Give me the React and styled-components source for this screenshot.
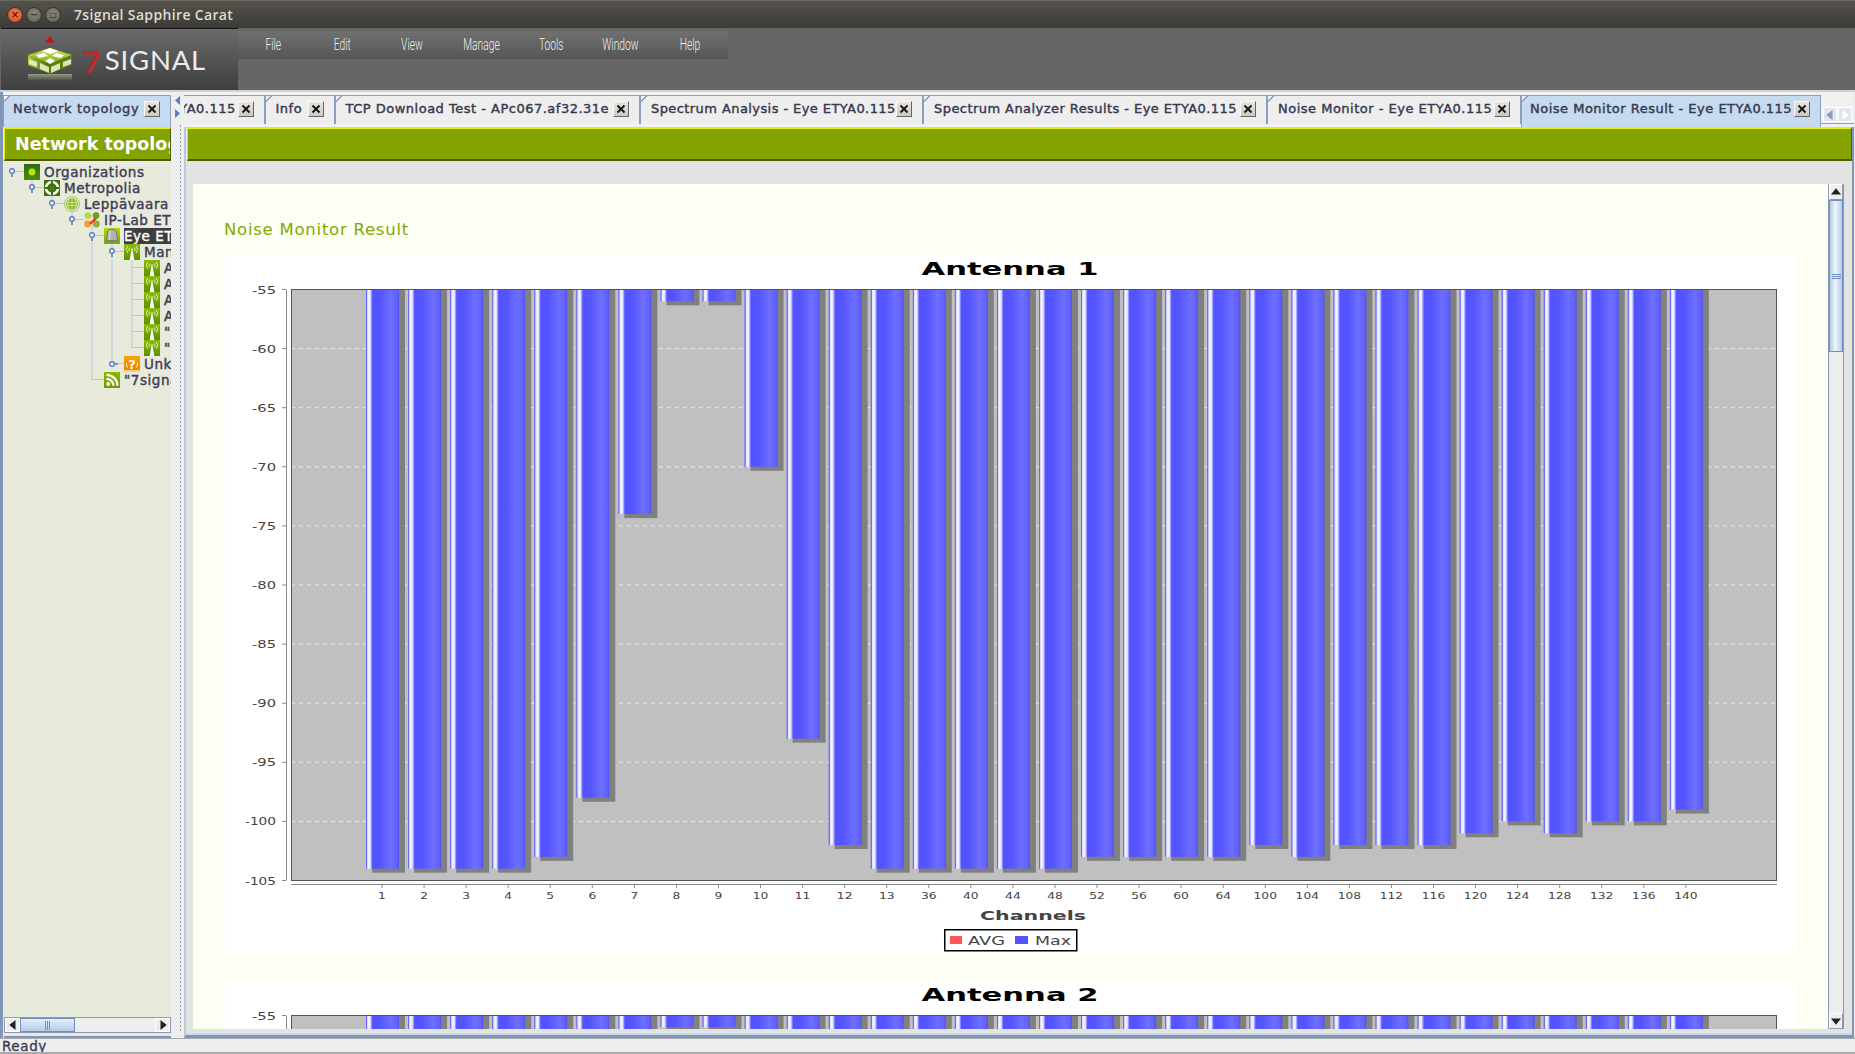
import React from "react";
import styled, { createGlobalStyle } from "styled-components";

const Global = createGlobalStyle`
  html, body { margin: 0; padding: 0; width: 1855px; height: 1054px; overflow: hidden; background: #eee; }
  * { box-sizing: border-box; }
`;
const UI = `"DejaVu Sans", "Liberation Sans", sans-serif`;

const Page = styled.div`
  width: 1855px; height: 1054px; display: flex; flex-direction: column; font-family: ${UI}; overflow: hidden;
`;
const TitleBar = styled.div`
  height: 28px; flex: none; display: flex; align-items: center; padding-left: 7px;
  background: linear-gradient(#55524c, #3c3b37); border-top: 1px solid #6a675f;
`;
const Light = styled.span`
  width: 16px; height: 16px; border-radius: 50%; margin-right: 3px; display: flex; align-items: center; justify-content: center;
  color: ${p => p.$close ? "#5a1a08" : "#3c3b37"}; font: bold 10px ${UI}; line-height: 1;
  background: ${p => p.$close ? "radial-gradient(circle at 50% 40%, #f08050, #d8481c)" : "radial-gradient(circle at 50% 40%, #8a877f, #5f5d56)"};
  border: 1px solid #36352f;
`;
const TitleText = styled.span`
  margin-left: 10px; color: #dfdbd2; font: 600 14px "Open Sans", sans-serif; letter-spacing: .35px;
`;
const Header = styled.div`
  height: 62px; flex: none; display: flex; background: #666;
`;
const LogoBox = styled.div`
  width: 237px; margin-left: 1px; height: 100%; flex: none; display: flex; align-items: center;
  border-top: 1px solid #111; background: linear-gradient(#6b6b6b, #3e3e3e);
  padding-left: 27px;
`;
const LogoSvg = styled.svg`
  flex: none; margin-top: -3px;
`;
const LogoWord = styled.span`
  font: 400 27.5px Lato, sans-serif; color: #ececec; letter-spacing: .8px; margin-left: 9px; margin-top: 4px; line-height: 1; display: flex;
  b { color: #c3262c; font-weight: 700; font-size: 31px; margin-right: 3px; font-family: Lato, sans-serif; }
`;
const Menu = styled.div`
  margin-top: 3px; width: 490px; height: 28px; display: flex; align-items: center;
  background: linear-gradient(#707070, #575757); border-bottom: 1px solid #4e4e4e;
`;
const MenuItem = styled.div`
  width: 69.6px; text-align: center; color: #f0f0f0; font: 300 16px Roboto, sans-serif;
  span { display: inline-block; transform: scaleX(.64); }
`;
const Workspace = styled.div`
  flex: 1; min-height: 0; display: flex; background: #e9e9e9; border-top: 2px solid #c9d2de;
`;
const LeftPane = styled.div`
  width: 171px; flex: none; display: flex; flex-direction: column; border-left: 3px solid #8096b8;
`;
const TabRow = styled.div`
  height: 35px; flex: none; position: relative; display: flex; align-items: flex-start; padding-top: 3px;
  overflow: hidden; background: #f1f1f1;
  &::after { content: ""; position: absolute; left: 0; right: 0; bottom: 3px; height: 1px; background: #8ba0bd; }
`;
const Tabs = styled.div`
  flex: 1; min-width: 0; display: flex; justify-content: ${p => p.$start ? "flex-start" : "flex-end"}; overflow: hidden; height: 100%;
`;
const Tab = styled.div`
  width: ${p => p.$w}px; flex: none; height: ${p => p.$active ? 32 : 29}px; position: relative; z-index: 1;
  display: flex; align-items: center; padding-left: ${p => p.$pl || 10}px; padding-right: 10px; white-space: nowrap;
  background: ${p => p.$active ? "#c6daf0" : "#eeeeee"}; overflow: hidden;
  border-top: 1px solid #8ba0bd; border-right: 1px solid #8ba0bd; border-left: 1px solid #8ba0bd;
  padding-bottom: ${p => p.$active ? 6 : 3}px;
  &::before {
    content: ""; position: absolute; left: -1px; top: -1px; width: 7px; height: 7px;
    background: linear-gradient(135deg, #f1f1f1 48%, #8ba0bd 48%, #8ba0bd 58%, transparent 58%);
  }
`;
const TabLabel = styled.span`
  color: #38384e; font-size: 13px; letter-spacing: ${p => p.$ls ?? .5}px; -webkit-text-stroke: .4px #38384e;
`;
const Close = styled.span`
  width: 16px; height: 16px; flex: none; margin-left: auto; display: flex; align-items: center; justify-content: center;
  background: linear-gradient(#e8e4dc, #cfcac0); border: 1px solid; border-color: #f8f8f8 #666 #666 #f8f8f8;
`;
const CloseBtn = () => (
  <Close><svg width="10" height="10" viewBox="0 0 10 10"><path d="M1.5 1.5 8.5 8.5M8.5 1.5 1.5 8.5" stroke="#111" strokeWidth="1.8" /></svg></Close>
);
const TitlePanel = styled.div`
  height: 34px; flex: none; display: flex; align-items: center; overflow: hidden; white-space: nowrap;
  background: #85a300; border-top: 2px solid #e6f000; border-bottom: 2px solid #4c5e00; border-left: 1px solid #e6f000; border-right: 1px solid #4c5e00;
  color: #fff; font-weight: 700; font-size: 17.5px; padding-left: 10px;
`;
const LeftTitle = styled(TitlePanel)`
  margin-left: 1px; width: 167px;
`;
const TreeBox = styled.div`
  flex: 1; min-height: 0; position: relative; overflow: hidden; background: #e8eadb; margin: 3px 0 0 1px; width: 167px;
`;
const TreeLines = styled.svg`
  position: absolute; left: 0; top: 0; pointer-events: none;
`;
const TreeRow = styled.div`
  height: 16px; display: flex; align-items: center; padding-left: ${p => 20 + p.$level * 20}px; white-space: nowrap; position: relative;
`;
const TreeIcon = styled.span`
  width: 16px; height: 16px; flex: none; display: block; svg { display: block; }
`;
const TreeText = styled.span`
  margin-left: 4px; color: ${p => p.$sel ? "#fff" : "#3d3d55"}; background: ${p => p.$sel ? "#3e3e3e" : "transparent"};
  font-size: 13.5px; letter-spacing: .55px; -webkit-text-stroke: ${p => p.$strong ? ".6px" : ".4px"}; line-height: 16px;
`;
const HScroll = styled.div`
  height: 16px; flex: none; width: 167px; margin-left: 1px; display: flex; align-items: stretch; background: #eee; border: 1px solid #8a99ad;
`;
const ScrollBtn = styled.div`
  width: 15px; flex: none; display: flex; align-items: center; justify-content: center; background: #eeeeee;
  border: 1px solid #fff;
`;
const HThumb = styled.div`
  width: 55px; flex: none; display: flex; align-items: center; justify-content: center; gap: 1px;
  background: linear-gradient(#e6eefa, #b4cce8); border: 1px solid #6f8fc0;
  i { width: 1px; height: 9px; background: #6f8fc0; display: block; }
`;
const Track = styled.div` flex: 1; `;
const LeftFoot = styled.div` height: 5px; flex: none; margin-left: 1px; width: 167px; border-bottom: 2px solid #8096b8; `;
const Divider = styled.div`
  width: 13px; flex: none; position: relative; background: #eee;
  &::after {
    content: ""; position: absolute; left: 8px; top: 32px; bottom: 6px; width: 3px;
    background-image: radial-gradient(circle, #9a9a9a 0 1px, transparent 1px); background-size: 3px 4px;
  }
`;
const DividerArrows = styled.svg` position: absolute; left: 3px; top: 3px; `;
const MainPane = styled.div`
  flex: 1; min-width: 0; display: flex; flex-direction: column; margin-right: 1px;
`;
const Nav = styled.div`
  flex: none; display: flex; gap: 1px; padding: 12px 2px 0 2px; position: relative; z-index: 1;
`;
const NavBtn = styled.div`
  width: 14px; height: 15px; background: #dfe6f0; border: 1px solid #fff; display: flex; align-items: center; justify-content: center;
`;
const Body = styled.div`
  flex: 1; min-height: 0; display: flex; flex-direction: column; background: #e3e3e3;
  border-left: 2px solid #b8c8de; border-right: 2px solid #8096b8; border-bottom: 3px solid #8096b8;
  box-shadow: inset 0 -2px 0 #c6daf0; padding-bottom: 6px;
`;
const GreenBar = styled(TitlePanel)` margin-left: 1px; `;
const Content = styled.div`
  margin: 23px 8px 0 7px; flex: 1; min-height: 0; display: flex; background: #fbfff4;
`;
const Scroller = styled.div`
  flex: 1; min-width: 0; overflow: hidden; padding: 35px 0 0 33px;
`;
const Heading = styled.div`
  height: 22px; margin: 0 0 15px -2px; color: #84a800; font-size: 16.5px; line-height: 22px; letter-spacing: .75px;
`;
const Card = styled.div`
  width: 1569px; height: 696px; background: #fff; margin-bottom: 30px; svg { display: block; }
`;
const VScroll = styled.div`
  width: 16px; flex: none; display: flex; flex-direction: column; background: #eee; border-left: 1px solid #8a99ad; border-right: 1px solid #8a99ad;
`;
const VThumb = styled.div`
  height: 152px; flex: none; display: flex; flex-direction: column; align-items: center; justify-content: center; gap: 1px;
  background: linear-gradient(90deg, #b4cce8, #f0f5fc 45%, #b4cce8); border: 1px solid #6f8fc0;
  i { height: 1px; width: 9px; background: #6f8fc0; display: block; }
`;
const VBtn = styled.div`
  height: 16px; flex: none; background: #eee; border: 1px solid #fff; border-color: #fff #8a99ad #8a99ad #fff; display: flex; align-items: center; justify-content: center;
`;
const Status = styled.div`
  height: 16px; flex: none; background: #eee; border-top: 1px solid #aaa; border-bottom: 2px solid #aaa; padding-left: 2px;
  color: #38384e; font-size: 13.5px; line-height: 15px; letter-spacing: .6px; -webkit-text-stroke: .3px #38384e; overflow: hidden;
`;

/* ---------- chart ---------- */
const OX = 226, OY = 256;
const channels = [1,2,3,4,5,6,7,8,9,10,11,12,13,36,40,44,48,52,56,60,64,100,104,108,112,116,120,124,128,132,136,140];
const values = [-104,-104,-104,-104,-103,-98,-74,-56,-56,-70,-93,-102,-104,-104,-104,-104,-104,-103,-103,-103,-103,-102,-103,-102,-102,-102,-101,-100,-101,-100,-100,-99];
const yOf = v => 289.5 + (-55 - v) * 11.82 - OY;
const xOf = i => 366 + 42.06 * i - OX;
const PX = 291 - OX, PR = 1777 - OX, PT = 289.5 - OY, PB = 880.5 - OY;

const Stretch = ({ x, y, w, anchor = "middle", fill = "#444", size = 9, weight = 400, children }) => (
  <text x={x} y={y} textLength={w} lengthAdjust="spacingAndGlyphs" textAnchor={anchor} fill={fill} fontSize={size} fontWeight={weight} fontFamily={UI}>{children}</text>
);

const Chart = ({ title, id }) => (
  <Card>
    <svg width="1569" height="696" viewBox="0 0 1569 696">
      <defs>
        <linearGradient id={`bar${id}`} x1="0" x2="1" y1="0" y2="0">
          <stop offset="0" stopColor="#5a5aff" />
          <stop offset=".025" stopColor="#7070ff" />
          <stop offset=".045" stopColor="#d8d8ff" />
          <stop offset=".08" stopColor="#f8f8ff" />
          <stop offset=".13" stopColor="#e4e4ff" />
          <stop offset=".17" stopColor="#8c8cff" />
          <stop offset=".2" stopColor="#5252ff" />
          <stop offset=".45" stopColor="#5656ff" />
          <stop offset=".75" stopColor="#6e6eff" />
          <stop offset=".93" stopColor="#6262ff" />
          <stop offset="1" stopColor="#5252ea" />
        </linearGradient>
      </defs>
      <Stretch x={784} y={19} w={177} size={17} weight={700} fill="#000">{title}</Stretch>
      <rect x={PX} y={PT} width={PR - PX} height={PB - PT} fill="#c0c0c0" />
      {Array.from({ length: 9 }, (_, k) => {
        const y = yOf(-60 - k * 5);
        return <line key={k} x1={PX} x2={PR} y1={y} y2={y} stroke="#e8e8e8" strokeDasharray="4 4" />;
      })}
      {values.map((v, i) => (
        <rect key={`s${i}`} x={xOf(i) + 6} y={PT} width={33} height={yOf(v) - PT + 4} fill="#808080" />
      ))}
      {values.map((v, i) => (
        <rect key={`b${i}`} x={xOf(i)} y={PT} width={33} height={yOf(v) - PT} fill={`url(#bar${id})`} />
      ))}
      <rect x={PX + .5} y={PT} width={PR - PX - 1} height={PB - PT} fill="none" stroke="#555" />
      <line x1={60.5} x2={60.5} y1={PT} y2={PB} stroke="#888" />
      {Array.from({ length: 11 }, (_, k) => {
        const v = -55 - k * 5, y = yOf(v);
        return (
          <g key={v}>
            <line x1={56} x2={60} y1={y} y2={y} stroke="#888" />
            <Stretch x={50} y={y + 4} anchor="end" w={v <= -100 ? 31 : 24} size={10}>{v}</Stretch>
          </g>
        );
      })}
      <line x1={PX} x2={PR} y1={628.5} y2={628.5} stroke="#888" />
      {channels.map((c, i) => {
        const x = xOf(i) + 16;
        const s = String(c);
        return (
          <g key={c}>
            <line x1={x} x2={x} y1={628} y2={632} stroke="#888" />
            <Stretch x={x} y={643} w={s.length * 7.8} size={9}>{s}</Stretch>
          </g>
        );
      })}
      <Stretch x={807} y={664} w={106} size={13} weight={700}>Channels</Stretch>
      <rect x={718.75} y={673.75} width={132} height={21} fill="#fff" stroke="#000" strokeWidth="1.5" />
      <rect x={724} y={680} width={12} height={8} fill="#ff5555" />
      <Stretch x={742} y={689} w={37} anchor="start" size={12}>AVG</Stretch>
      <rect x={789} y={680} width={13} height={8} fill="#5555ff" />
      <Stretch x={809} y={689} w={36} anchor="start" size={12}>Max</Stretch>
    </svg>
  </Card>
);

/* ---------- icons ---------- */
const Tile = ({ from = "#9ac400", to = "#4f7d00", id, children }) => (
  <svg width="16" height="16" viewBox="0 0 16 16">
    <defs><linearGradient id={id} x1="0" x2="0" y1="0" y2="1"><stop offset="0" stopColor={from} /><stop offset="1" stopColor={to} /></linearGradient></defs>
    <rect width="16" height="16" fill={`url(#${id})`} />
    {children}
  </svg>
);
const IconOrg = () => <Tile id="t1" from="#2f6a10" to="#4d8a12"><circle cx="8" cy="8" r="3.4" fill="#b8e800" /></Tile>;
const IconCity = () => (
  <svg width="16" height="16" viewBox="0 0 16 16">
    <rect width="16" height="16" fill="#3e6e10" />
    <circle cx="8" cy="8" r="6" fill="none" stroke="#f4f8ee" strokeWidth="2.6" />
    <path d="M8 4V1M8 12v3M4 8H1M12 8h3" stroke="#3e6e10" strokeWidth="2" />
    <circle cx="8" cy="8" r="2.6" fill="#4f7d10" />
  </svg>
);
const IconGlobe = () => (
  <svg width="16" height="16" viewBox="0 0 16 16">
    <circle cx="8" cy="8" r="7.4" fill="#f2f6e4" stroke="#9cc34a" />
    <circle cx="8" cy="8" r="6" fill="#8cba30" />
    <path d="M2.5 6.5h11M2.5 9.5h11M8 2.2v11.6M5 3c-1.5 3-1.5 7 0 10M11 3c1.5 3 1.5 7 0 10" stroke="#dbecb0" strokeWidth=".7" fill="none" />
  </svg>
);
const IconHex = () => (
  <svg width="16" height="16" viewBox="0 0 16 16">
    <circle cx="4" cy="3.6" r="3.4" fill="#b4d840" />
    <circle cx="12" cy="3.6" r="3.4" fill="#6aa018" />
    <circle cx="3.6" cy="12" r="3.4" fill="#f5a020" />
    <circle cx="12.4" cy="12" r="3.4" fill="#90b040" />
    <path d="M5 11.5 11 5.5 12.5 7.5 7 12.5Z" fill="#ee3020" />
  </svg>
);
const IconEye = () => (
  <Tile id="t2" from="#b0d800" to="#78a800">
    <path d="M2.5 13 3.6 4Q4 1 8 1T12.4 4L13.5 13Z" fill="#b0b0b0" stroke="#666" strokeWidth=".7" />
    <path d="M6 2.5 5.5 12" stroke="#d8d8d8" strokeWidth="1.4" />
    <rect x="1.5" y="12" width="13" height="2" fill="#808080" />
  </Tile>
);
const IconAnt = ({ i }) => (
  <Tile id={`a${i}`} from="#8dbb08" to="#5b8f00">
    <path d="M7.3 7h1.4l1.6 9H5.7Z" fill="#fff" />
    <circle cx="8" cy="5.5" r="1.1" fill="#fff" />
    <path d="M5.6 3.6a3.2 3.2 0 0 0 0 3.8M10.4 3.6a3.2 3.2 0 0 1 0 3.8M3.6 2.2a5.6 5.6 0 0 0 0 6.6M12.4 2.2a5.6 5.6 0 0 1 0 6.6" fill="none" stroke="#fff" strokeWidth=".8" />
  </Tile>
);
const IconUnk = () => (
  <Tile id="t3" from="#f7a400" to="#f08000">
    <text x="8" y="12.5" textAnchor="middle" fontSize="13" fontWeight="700" fill="#fff" fontFamily={UI}>?</text>
    <path d="M2.5 7a6 6 0 0 0 1 4.5M13.5 7a6 6 0 0 1-1 4.5" fill="none" stroke="#fff" />
    <rect y="14" width="16" height="2" fill="#ffd060" />
  </Tile>
);
const IconRss = () => (
  <Tile id="t4" from="#88bb00" to="#6a9a00">
    <circle cx="4.2" cy="12" r="1.9" fill="#fff" />
    <path d="M2.5 6.8a7 7 0 0 1 7 7M2.5 2.8a11 11 0 0 1 11 11" fill="none" stroke="#fff" strokeWidth="2.2" />
  </Tile>
);

const rows = [
  { l: 0, t: "Organizations", I: IconOrg },
  { l: 1, t: "Metropolia", I: IconCity },
  { l: 2, t: "Leppävaara", I: IconGlobe },
  { l: 3, t: "IP-Lab ETYA", I: IconHex },
  { l: 4, t: "Eye ETYA0.115", I: IconEye, sel: true },
  { l: 5, t: "Management", I: IconAnt },
  { l: 6, t: "APc067", I: IconAnt, strong: true },
  { l: 6, t: "APc068", I: IconAnt, strong: true },
  { l: 6, t: "APc069", I: IconAnt, strong: true },
  { l: 6, t: "APc070", I: IconAnt, strong: true },
  { l: 6, t: '"7signal"', I: IconAnt },
  { l: 6, t: '"7signal"', I: IconAnt },
  { l: 5, t: "Unknown", I: IconUnk },
  { l: 4, t: '"7signal"', I: IconRss },
];
const yRow = i => 8 + 16 * i;
const Handle = ({ x, y, open }) => (
  <g stroke="#5b7fc0" fill="#fff">
    {open
      ? <line x1={x} x2={x} y1={y} y2={y + 6} strokeWidth="1.6" />
      : <line x1={x} x2={x + 6} y1={y} y2={y} strokeWidth="1.6" />}
    <circle cx={x} cy={y} r="2.3" strokeWidth="1.4" />
  </g>
);
const Connectors = () => {
  const c = "#b5c8de";
  const segs = rows.map((r, i) => {
    const hx = 8 + 20 * r.l;
    return <line key={`h${i}`} x1={hx} x2={hx + 12} y1={yRow(i) - .5} y2={yRow(i) - .5} stroke={c} />;
  });
  const v = (x, a, b) => <line key={`${x}-${a}`} x1={x} x2={x} y1={yRow(a)} y2={yRow(b)} stroke={c} />;
  return (
    <TreeLines width="167" height="260">
      {segs}
      {v(28, 0, 1)}{v(48, 1, 2)}{v(68, 2, 3)}{v(88, 3, 13)}{v(108, 4, 12)}{v(128, 5, 11)}
      {[0, 1, 2, 3, 4, 5].map(i => <Handle key={i} x={8 + 20 * rows[i].l} y={yRow(i) - 1} open />)}
      <Handle x={108} y={yRow(12)} />
    </TreeLines>
  );
};

const Tri = ({ d, f = "#222" }) => <svg width="10" height="10" viewBox="0 0 8 8"><path d={d} fill={f} /></svg>;

const tabs = [
  { t: "Noise Monitor - Eye ETYA0.115", w: 254 },
  { t: "Info", w: 70 },
  { t: "TCP Download Test - APc067.af32.31e", w: 305.5 },
  { t: "Spectrum Analysis - Eye ETYA0.115", w: 283, ls: .42 },
  { t: "Spectrum Analyzer Results - Eye ETYA0.115", w: 344, ls: .44 },
  { t: "Noise Monitor - Eye ETYA0.115", w: 254 },
  { t: "Noise Monitor Result - Eye ETYA0.115", w: 300, active: true, pl: 8 },
];

const Cube = () => (
  <LogoSvg width="46" height="46" viewBox="0 -2 46 46">
    <defs>
      <linearGradient id="cubeT" x1="0" x2="0" y1="0" y2="1"><stop offset="0" stopColor="#cfe858" /><stop offset="1" stopColor="#7ea812" /></linearGradient>
      <linearGradient id="cubeS" x1="0" x2="1" y1="0" y2="0"><stop offset="0" stopColor="#a4cc28" /><stop offset="1" stopColor="#476a08" /></linearGradient>
      <linearGradient id="cubeG" x1="0" x2="0" y1="0" y2="1"><stop offset="0" stopColor="#cfe0a0" stopOpacity=".55" /><stop offset="1" stopColor="#cfe0a0" stopOpacity="0" /></linearGradient>
    </defs>
    <path d="M17 5 22 -1 27 5 22 6Z" fill="#c01a1a" />
    <path d="M0 18 22 11 44 18 22 27Z" fill="url(#cubeT)" />
    <path d="M0 18 22 27V37L0 28Z" fill="url(#cubeS)" />
    <path d="M44 18 22 27V37L44 28Z" fill="#5c7f10" />
    <path d="M22 11 30 14 22 17 14 14ZM8 18 16 16 20 19 11 21ZM36 18 28 16 24 19 33 21ZM22 21 27 24 22 27 17 24Z" fill="#fff" />
    <path d="M1 22 9 25V30L1 27ZM12 26 21 30V36L12 32ZM43 22 35 25V30L43 27ZM32 26 23 30V36L32 32Z" fill="#f2f6dc" opacity=".85" />
    <rect x="0" y="37" width="44" height="7" fill="url(#cubeG)" />
  </LogoSvg>
);

export default function App() {
  return (
    <Page>
      <Global />
      <TitleBar>
        <Light $close>×</Light>
        <Light>−</Light>
        <Light>▫</Light>
        <TitleText>7signal Sapphire Carat</TitleText>
      </TitleBar>
      <Header>
        <LogoBox>
          <Cube />
          <LogoWord><b>7</b>SIGNAL</LogoWord>
        </LogoBox>
        <Menu>
          {["File", "Edit", "View", "Manage", "Tools", "Window", "Help"].map(m => (
            <MenuItem key={m}><span>{m}</span></MenuItem>
          ))}
        </Menu>
      </Header>
      <Workspace>
        <LeftPane>
          <TabRow>
            <Tabs $start>
              <Tab $w={168} $active $pl={9}><TabLabel $ls={.7}>Network topology</TabLabel><CloseBtn /></Tab>
            </Tabs>
          </TabRow>
          <LeftTitle>Network topology</LeftTitle>
          <TreeBox>
            <Connectors />
            {rows.map(({ l, t, I, sel, strong }, i) => (
              <TreeRow key={i} $level={l}>
                <TreeIcon><I i={i} /></TreeIcon>
                <TreeText $sel={sel} $strong={strong}>{t}</TreeText>
              </TreeRow>
            ))}
          </TreeBox>
          <HScroll>
            <ScrollBtn><Tri d="M6 0V8L1 4Z" /></ScrollBtn>
            <HThumb><i /><i /><i /></HThumb>
            <Track />
            <ScrollBtn><Tri d="M2 0V8L7 4Z" /></ScrollBtn>
          </HScroll>
          <LeftFoot />
        </LeftPane>
        <Divider>
          <DividerArrows width="8" height="26" viewBox="0 0 8 26">
            <path d="M6 1V10L1 5.5Z" fill="#5b7fc0" />
            <path d="M1 14V23L6 18.5Z" fill="#5b7fc0" />
          </DividerArrows>
        </Divider>
        <MainPane>
          <TabRow>
            <Tabs>
              {tabs.map((tb, i) => (
                <Tab key={i} $w={tb.w} $active={tb.active} $pl={tb.pl}>
                  <TabLabel $ls={tb.ls}>{tb.t}</TabLabel><CloseBtn />
                </Tab>
              ))}
            </Tabs>
            <Nav>
              <NavBtn><Tri d="M6 0V8L1 4Z" f="#8a9ab0" /></NavBtn>
              <NavBtn><Tri d="M2 0V8L7 4Z" f="#fff" /></NavBtn>
            </Nav>
          </TabRow>
          <Body>
            <GreenBar />
            <Content>
              <Scroller>
                <Heading>Noise Monitor Result</Heading>
                <Chart title="Antenna 1" id="1" />
                <Chart title="Antenna 2" id="2" />
              </Scroller>
              <VScroll>
                <VBtn><Tri d="M0 6H8L4 1Z" /></VBtn>
                <VThumb><i /><i /><i /></VThumb>
                <Track />
                <VBtn><Tri d="M0 2H8L4 7Z" /></VBtn>
              </VScroll>
            </Content>
          </Body>
        </MainPane>
      </Workspace>
      <Status>Ready</Status>
    </Page>
  );
}
